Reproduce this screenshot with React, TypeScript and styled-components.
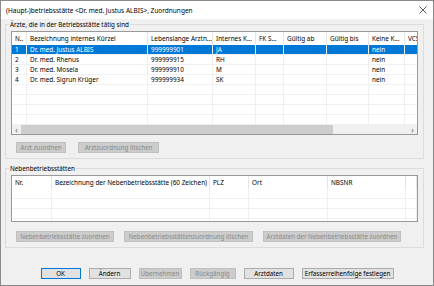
import React from "react";
import styled, { createGlobalStyle } from "styled-components";

const GlobalStyle = createGlobalStyle`
  html, body {
    margin: 0;
    padding: 0;
    background: #f0f0f0;
  }
  body {
    font-family: "Noto Sans", "Liberation Sans", sans-serif;
    color: #000;
  }
`;

const doctors = [
  { nr: "1", name: "Dr. med. Justus ALBIS", lanr: "999999901", kuerzel: "JA" },
  { nr: "2", name: "Dr. med. Rhenus", lanr: "999999915", kuerzel: "RH" },
  { nr: "3", name: "Dr. med. Mosela", lanr: "999999910", kuerzel: "M" },
  { nr: "4", name: "Dr. med. Sigrun Krüger", lanr: "999999934", kuerzel: "SK" },
];

const doctorCols = "15px 121px 65px 43px 28px 43px 42px 36px 30px";
const doctorHeads = [
  "N..",
  "Bezeichnung internes Kürzel",
  "Lebenslange Arztn...",
  "Internes K...",
  "FK S...",
  "Gültig ab",
  "Gültig bis",
  "Keine K...",
  "VCS",
];

const branchCols = "40px 158px 39px 79px 78px 11px";
const branchHeads = [
  "Nr.",
  "Bezeichnung der Nebenbetriebsstätte (60 Zeichen)",
  "PLZ",
  "Ort",
  "NBSNR",
  "",
];

const App: React.FC = () => {
  return (
    <>
      <GlobalStyle />
      <Window>
        <TitleBar>
          <span>(Haupt-)betriebsstätte &lt;Dr. med. Justus ALBIS&gt;, Zuordnungen</span>
          <svg width="8" height="8" viewBox="0 0 8 8">
            <path d="M0.5 0.5 L7.5 7.5 M7.5 0.5 L0.5 7.5" stroke="#333" strokeWidth="0.8" />
          </svg>
        </TitleBar>
        <Body>
          <Group>
            <Legend>Ärzte, die in der Betriebsstätte tätig sind</Legend>
            <ListView $height={102}>
              <HeaderRow $cols={doctorCols}>
                {doctorHeads.map((h, i) => (
                  <HeaderCell key={i}>{h}</HeaderCell>
                ))}
              </HeaderRow>
              <Rows>
                {doctors.map((d, i) => (
                  <Row key={d.nr} $cols={doctorCols} $selected={i === 0}>
                    <Cell>{d.nr}</Cell>
                    <Cell>{d.name}</Cell>
                    <Cell>{d.lanr}</Cell>
                    <Cell>{d.kuerzel}</Cell>
                    <Cell />
                    <Cell />
                    <Cell />
                    <Cell>nein</Cell>
                    <Cell />
                  </Row>
                ))}
                {[0, 1, 2, 3].map((i) => (
                  <Row key={"e" + i} $cols={doctorCols}>
                    {doctorHeads.map((_, j) => (
                      <Cell key={j} />
                    ))}
                  </Row>
                ))}
              </Rows>
              <ScrollBar>
                <Arrow>‹</Arrow>
                <Track>
                  <Thumb />
                </Track>
                <Arrow>›</Arrow>
              </ScrollBar>
            </ListView>
            <ButtonRow $gap={12}>
              <Button $width={50} disabled>Arzt zuordnen</Button>
              <Button $width={81} disabled>Arztzuordnung löschen</Button>
            </ButtonRow>
          </Group>

          <Group>
            <Legend>Nebenbetriebsstätten</Legend>
            <ListView $height={45}>
              <HeaderRow $cols={branchCols}>
                {branchHeads.map((h, i) => (
                  <HeaderCell key={i}>{h}</HeaderCell>
                ))}
              </HeaderRow>
              <Rows>
                {[0, 1, 2, 3].map((i) => (
                  <Row key={i} $cols={branchCols}>
                    {branchHeads.map((_, j) => (
                      <Cell key={j} />
                    ))}
                  </Row>
                ))}
              </Rows>
            </ListView>
            <ButtonRow $gap={10} $top={9}>
              <Button $width={98} disabled>Nebenbetriebsstätte zuordnen</Button>
              <Button $width={129} disabled>Nebenbetriebsstättenzuordnung löschen</Button>
              <Button $width={138} disabled>Arztdaten der Nebenbetriebsstätte zuordnen</Button>
            </ButtonRow>
          </Group>

          <Footer>
            <Button $width={40} $primary>OK</Button>
            <Button $width={42}>Ändern</Button>
            <Button $width={43} disabled>Übernehmen</Button>
            <Button $width={46} disabled>Rückgängig</Button>
            <Button $width={50}>Arztdaten</Button>
            <Button $width={92}>Erfasserreihenfolge festlegen</Button>
          </Footer>
        </Body>
      </Window>
    </>
  );
};

const Window = styled.div`
  width: 434px;
  height: 286px;
  box-sizing: border-box;
  border: 1px solid #8a8a8a;
  background: #f0f0f0;
  display: flex;
  flex-direction: column;
  overflow: hidden;
`;

const TitleBar = styled.div`
  height: 18px;
  flex: none;
  background: #fff;
  display: flex;
  align-items: center;
  justify-content: space-between;
  padding: 0 6px 0 5px;
  font-size: 6.5px;
  white-space: nowrap;
`;

const Body = styled.div`
  flex: 1;
  display: flex;
  flex-direction: column;
  padding: 1px 9px 0 4px;
`;

const Group = styled.fieldset`
  margin: 0 0 5px 0;
  padding: 2px 5px 5px 5px;
  border: 1px solid #dcdcdc;
  min-width: 0;
`;

const Legend = styled.legend`
  padding: 0 1px;
  margin-left: -2px;
  font-size: 6.3px;
  line-height: 9px;
`;

const ListView = styled.div<{ $height: number }>`
  height: ${(p) => p.$height}px;
  border: 1px solid #999;
  background: #fff;
  display: flex;
  flex-direction: column;
  overflow: hidden;
`;

const HeaderRow = styled.div<{ $cols: string }>`
  display: grid;
  grid-template-columns: ${(p) => p.$cols};
  height: 13px;
  flex: none;
`;

const HeaderCell = styled.div`
  border-right: 1px solid #e5e5e5;
  padding-left: 3px;
  font-size: 6.4px;
  line-height: 13px;
  white-space: nowrap;
  overflow: hidden;
`;

const Rows = styled.div`
  flex: 1;
  overflow: hidden;
`;

const Row = styled.div<{ $cols: string; $selected?: boolean }>`
  display: grid;
  grid-template-columns: ${(p) => p.$cols};
  height: 10px;
  background: ${(p) => (p.$selected ? "#0078d7" : "#fff")};
  color: ${(p) => (p.$selected ? "#fff" : "#000")};
`;

const Cell = styled.div`
  border-right: 1px solid #f0f0f0;
  border-bottom: 1px solid #f0f0f0;
  padding-left: 3px;
  font-size: 6.4px;
  line-height: 9px;
  white-space: nowrap;
  overflow: hidden;
`;

const ScrollBar = styled.div`
  height: 9px;
  flex: none;
  display: flex;
  align-items: center;
  background: #f0f0f0;
`;

const Arrow = styled.div`
  width: 9px;
  text-align: center;
  font-size: 8px;
  line-height: 9px;
  color: #606060;
`;

const Track = styled.div`
  flex: 1;
  height: 100%;
  display: flex;
  align-items: center;
`;

const Thumb = styled.div`
  width: 312px;
  height: 100%;
  background: #cdcdcd;
`;

const ButtonRow = styled.div<{ $gap: number; $top?: number }>`
  display: flex;
  gap: ${(p) => p.$gap}px;
  margin-top: ${(p) => p.$top ?? 7}px;
  padding-left: 5px;
`;

const Button = styled.button<{ $width: number; $primary?: boolean }>`
  width: ${(p) => p.$width}px;
  height: 11px;
  box-sizing: border-box;
  padding: 0;
  font-family: inherit;
  font-size: 6.2px;
  line-height: 9px;
  white-space: nowrap;
  color: #000;
  background: #e1e1e1;
  border: 1px solid ${(p) => (p.$primary ? "#0078d7" : "#adadad")};

  &:disabled {
    color: #8a8a8a;
    background: #cccccc;
    border-color: #bfbfbf;
  }
`;

const Footer = styled.div`
  margin-top: auto;
  display: flex;
  justify-content: center;
  gap: 8px;
  padding: 0 0 6px 5px;
`;

export default App;
